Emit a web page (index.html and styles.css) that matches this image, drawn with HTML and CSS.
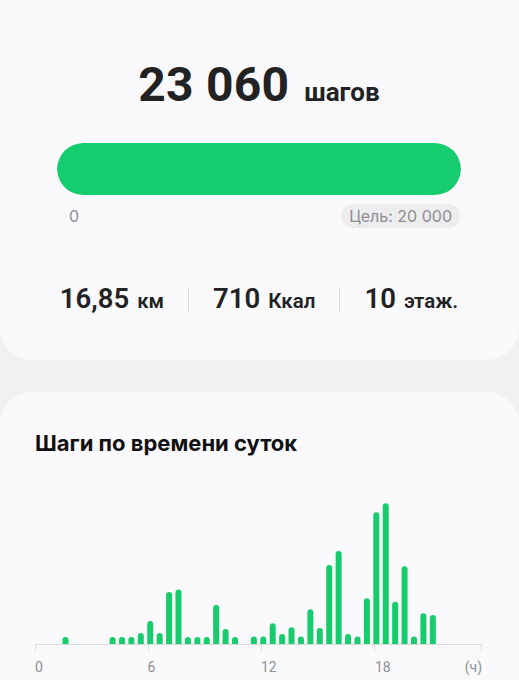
FILE: index.html
```html
<!DOCTYPE html>
<html lang="ru">
<head>
<meta charset="utf-8">
<title>Шаги</title>
<link rel="stylesheet" href="styles.css">
</head>
<body>
<div class="card card-top">
  <div class="headline">
    <span class="big">23 060</span>
    <span class="big-unit">шагов</span>
  </div>
  <div class="progress"><div class="progress-fill"></div></div>
  <div class="progress-labels">
    <span class="zero">0</span>
    <span class="goal">Цель: 20 000</span>
  </div>
  <div class="stats">
    <div class="stat"><span class="num">16,85</span><span class="unit">км</span></div>
    <div class="sep"></div>
    <div class="stat"><span class="num">710</span><span class="unit">Ккал</span></div>
    <div class="sep"></div>
    <div class="stat"><span class="num">10</span><span class="unit">этаж.</span></div>
  </div>
</div>
<div class="card card-chart">
  <h2 class="chart-title">Шаги по времени суток</h2>
  <svg class="chart" id="chart" width="460" height="185" viewBox="0 0 460 185">
    <g id="bars" fill="#17cc6d"></g>
    <line x1="0" y1="150.5" x2="447" y2="150.5" stroke="#d9d9dc" stroke-width="1"/>
    <g stroke="#d9d9dc" stroke-width="1">
      <line x1="0.5" y1="150" x2="0.5" y2="157"/>
      <line x1="113.5" y1="150" x2="113.5" y2="157"/>
      <line x1="226.5" y1="150" x2="226.5" y2="157"/>
      <line x1="339.5" y1="150" x2="339.5" y2="157"/>
      <line x1="446.5" y1="150" x2="446.5" y2="157"/>
    </g>
    <g class="axis-labels">
      <text x="0" y="178">0</text>
      <text x="112.5" y="178">6</text>
      <text x="226" y="178">12</text>
      <text x="340" y="178">18</text>
      <text x="447" y="178" text-anchor="end">(ч)</text>
    </g>
  </svg>
</div>
<script>
  var data = {3:7,8:7,9:7,10:7,11:11,12:23,13:11,14:52,15:54.5,16:7,17:7,18:7,19:39,20:15,21:7,
    23:7.5,24:7.5,25:20.7,26:10,27:16.7,28:7.5,29:34.7,30:16,31:79,32:93,33:10,34:7.5,35:45.7,
    36:131.7,37:140.7,38:42.3,39:77.7,40:7.5,41:30.7,42:29};
  var g = document.getElementById('bars');
  var ns = 'http://www.w3.org/2000/svg';
  Object.keys(data).forEach(function (k) {
    var h = data[k];
    var x = -0.8 + 9.42 * Number(k);
    var top = 150 - h;
    var p = document.createElementNS(ns, 'path');
    p.setAttribute('d', 'M' + x + ',150 V' + (top + 3) + ' a3,3 0 0 1 6,0 V150 Z');
    g.appendChild(p);
  });
</script>
</body>
</html>
```
FILE: styles.css
```css
html, body {
  margin: 0;
  padding: 0;
}
body {
  background: #f1f1f3;
  font-family: Roboto, "Noto Sans", "Liberation Sans", sans-serif;
  color: #222224;
  width: 519px;
  height: 680px;
  overflow: hidden;
}
.card {
  background: #fafafc;
}
.card-top {
  border-radius: 0 0 32px 32px;
  padding: 57px 58px 43px 57px;
  height: 360px;
  box-sizing: border-box;
}
.headline {
  display: flex;
  justify-content: center;
  align-items: baseline;
  gap: 15px;
  height: 56px;
  line-height: 56px;
}
.big {
  font-size: 48px;
  font-weight: 700;
  letter-spacing: 0.2px;
}
.big-unit {
  font-size: 26px;
  font-weight: 700;
}
.progress {
  margin-top: 30px;
  height: 52px;
  border-radius: 26px;
  background: #eeeef0;
  overflow: hidden;
}
.progress-fill {
  width: 100%;
  height: 100%;
  background: #15cd6e;
  border-radius: 26px;
}
.progress-labels {
  margin-top: 9px;
  display: flex;
  justify-content: space-between;
  align-items: center;
  height: 24px;
  font-family: Inter, Roboto, sans-serif;
  font-size: 16px;
  color: #8d8d90;
}
.zero {
  margin-left: 12px;
}
.goal {
  background: #ededef;
  border-radius: 12px;
  height: 24px;
  line-height: 24px;
  padding: 0 8px 0 8px;
  margin-right: 1px;
}
.stats {
  margin: 55px -40px 0;
  display: flex;
  justify-content: center;
  align-items: center;
  gap: 24px;
  height: 34px;
}
.stat {
  flex: none;
  display: flex;
  align-items: baseline;
  gap: 8px;
  line-height: 34px;
}
.num {
  font-size: 27.5px;
  font-weight: 600;
}
.unit {
  font-size: 20.5px;
  font-weight: 600;
}
.sep {
  flex: none;
  width: 1px;
  height: 22px;
  background: #dcdcdf;
}
.card-chart {
  margin-top: 32px;
  border-radius: 32px 32px 0 0;
  padding: 37px 0 0 35px;
  height: 288px;
  box-sizing: border-box;
}
.chart-title {
  margin: 0;
  font-family: Inter, Roboto, sans-serif;
  font-size: 22px;
  font-weight: 700;
  line-height: 28px;
  color: #111113;
}
.chart {
  display: block;
  margin-top: 37px;
}
.axis-labels text {
  font-family: Roboto, "Noto Sans", "Liberation Sans", sans-serif;
  font-size: 14px;
  fill: #8e8e91;
}
```
